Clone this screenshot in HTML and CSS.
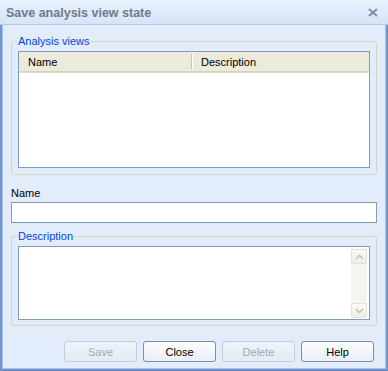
FILE: index.html
```html
<!DOCTYPE html>
<html lang="en">
<head>
    <meta charset="UTF-8">
    <title>Save analysis view state</title>
    <link rel="stylesheet" href="styles.css">
</head>
<body>
    <div class="window">
        <div class="titlebar">
            <span class="title">Save analysis view state</span>
            <svg class="close" width="10" height="9" viewBox="0 0 10 9">
                <path d="M1 1 L9 8 M9 1 L1 8" stroke="#7f8ca3" stroke-width="2" fill="none"/>
            </svg>
        </div>
        <div class="content">
            <fieldset class="group views">
                <legend>Analysis views</legend>
                <div class="list">
                    <div class="list-head">
                        <div class="col col-name">Name</div>
                        <div class="col col-desc">Description</div>
                    </div>
                </div>
            </fieldset>

            <label class="field-label" for="name">Name</label>
            <input class="text-input" type="text" id="name">

            <fieldset class="group desc">
                <legend>Description</legend>
                <div class="memo">
                    <div class="memo-text"></div>
                    <div class="scrollbar">
                        <div class="sb-btn">
                            <svg width="9" height="6" viewBox="0 0 9 6"><path d="M1 5 L4.5 1.5 L8 5" stroke="#c2c5b6" stroke-width="1.6" fill="none"/></svg>
                        </div>
                        <div class="sb-track"></div>
                        <div class="sb-btn">
                            <svg width="9" height="6" viewBox="0 0 9 6"><path d="M1 1 L4.5 4.5 L8 1" stroke="#c2c5b6" stroke-width="1.6" fill="none"/></svg>
                        </div>
                    </div>
                </div>
            </fieldset>

            <div class="buttons">
                <button class="btn" disabled>Save</button>
                <button class="btn">Close</button>
                <button class="btn" disabled>Delete</button>
                <button class="btn">Help</button>
            </div>
        </div>
    </div>
</body>
</html>
```

FILE: styles.css
```css
body {
    margin: 0;
    font-family: "Liberation Sans", Arial, sans-serif;
    font-size: 11px;
    background: #e2ecfb;
}
.window {
    width: 388px;
    height: 371px;
    box-sizing: border-box;
    background: #e2ecfb;
    border-left: 2px solid #7294cf;
    border-right: 2px solid #7294cf;
    border-bottom: 2px solid #6e8fc8;
    box-shadow: inset 1px 0 0 #a9c3ea, inset -1px 0 0 #a9c3ea, inset 0 -1px 0 #a9c3ea;
    display: flex;
    flex-direction: column;
}
.titlebar {
    height: 25px;
    box-sizing: border-box;
    margin: 0 -2px;
    padding: 0 10px 0 6px;
    display: flex;
    align-items: center;
    justify-content: space-between;
    background: linear-gradient(#e9f1fc, #d5e4f8);
    border-bottom: 1px solid #b3c9ea;
}
.title {
    font-weight: bold;
    font-size: 12.5px;
    color: #6f7b8c;
    padding-top: 1px;
}
.close { margin-top: 1px; }
.content {
    padding: 10px 9px 0 9px;
    display: flex;
    flex-direction: column;
}
.group {
    margin: 0;
    border: 1px solid #d3d7c2;
    border-radius: 3px;
    padding: 2px 6px 6px 6px;
}
.group legend {
    color: #0046e0;
    padding: 0 1px;
    margin-left: -1px;
    line-height: 13px;
}
.list {
    height: 117px;
    margin-top: 1px;
    background: #fff;
    border: 1px solid #7f9db9;
    box-sizing: border-box;
}
.list-head {
    display: flex;
    height: 21px;
    background: #ebeadb;
    box-shadow: inset 0 -1px 0 #e2decd, inset 0 -2px 0 #d6d2c2;
}
.col {
    line-height: 20px;
    padding-left: 9px;
    color: #000;
}
.col-name {
    width: 163px;
    border-right: 1px solid #c7c5b2;
    box-shadow: 1px 0 0 #fff;
    margin: 2px 0 4px;
    line-height: 16px;
}
.col-desc { padding-left: 9px; }
.field-label {
    margin-top: 12px;
    line-height: 13px;
    color: #000;
}
.text-input {
    margin: 2px 0 0;
    height: 21px;
    box-sizing: border-box;
    border: 1px solid #7f9db9;
    background: #fff;
    padding: 0 3px;
}
.desc { margin-top: 7px; padding-bottom: 5px; }
.memo {
    height: 74px;
    margin-top: 1px;
    box-sizing: border-box;
    border: 1px solid #7f9db9;
    background: #fff;
    display: flex;
}
.memo-text { flex: 1; }
.scrollbar {
    width: 16px;
    margin: 2px 2px 1px 0;
    background: #f5f4ef;
    display: flex;
    flex-direction: column;
}
.sb-btn {
    height: 15px;
    box-sizing: border-box;
    border: 1px solid #e1e3d8;
    border-radius: 2px;
    background: linear-gradient(#fbfbf8, #eeede5);
    display: flex;
    align-items: center;
    justify-content: center;
}
.sb-track { flex: 1; }
.buttons {
    margin-top: 15px;
    padding-left: 53px;
    display: flex;
    gap: 6px;
}
.btn {
    flex: none;
    width: 73px;
    height: 21px;
    font-family: "Liberation Sans", Arial, sans-serif;
    font-size: 11px;
    color: #000;
    border: 1px solid #7b8ea8;
    border-radius: 3px;
    background: linear-gradient(#fdfdfd, #e9eef5);
    padding: 0;
}
.btn:disabled {
    color: #a3a8b0;
    border-color: #c2cdd9;
    background: linear-gradient(#eef3fa, #e3ebf6);
}
```
